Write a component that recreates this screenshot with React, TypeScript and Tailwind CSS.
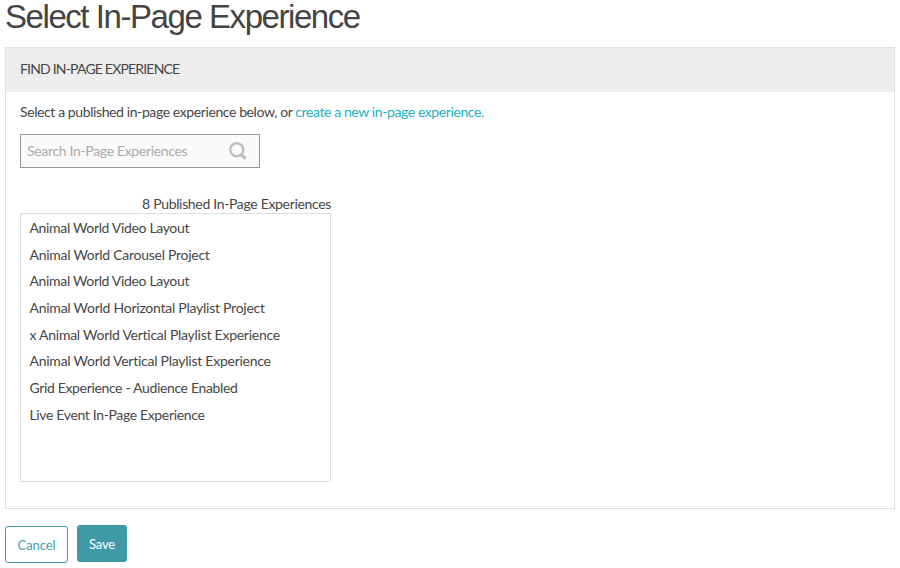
import React from "react";

const experiences: { name: string; tracking: string }[] = [
  { name: "Animal World Video Layout", tracking: "tracking-[-0.34px]" },
  { name: "Animal World Carousel Project", tracking: "tracking-[-0.27px]" },
  { name: "Animal World Video Layout", tracking: "tracking-[-0.34px]" },
  { name: "Animal World Horizontal Playlist Project", tracking: "tracking-[-0.25px]" },
  { name: "x Animal World Vertical Playlist Experience", tracking: "tracking-[-0.26px]" },
  { name: "Animal World Vertical Playlist Experience", tracking: "tracking-[-0.25px]" },
  { name: "Grid Experience - Audience Enabled", tracking: "tracking-[-0.35px]" },
  { name: "Live Event In-Page Experience", tracking: "tracking-[-0.35px]" },
];

function SearchIcon() {
  return (
    <svg width="18" height="18" viewBox="0 0 18 18" fill="none" stroke="#bebebe">
      <circle cx="7.7" cy="7.8" r="6.5" strokeWidth="2.4" />
      <path d="M12.6 12.9 L15.6 15.9" strokeWidth="3.2" strokeLinecap="round" />
    </svg>
  );
}

export default function App() {
  return (
    <main className="h-[568px] w-[900px] bg-white pl-[5px] font-['Lato',sans-serif] text-[14px] text-[#464646]">
      <h1 className="h-[47px] whitespace-nowrap font-['Liberation_Sans',sans-serif] text-[33px] leading-[33px] tracking-[-1.44px] text-[#444444]">
        Select In-Page Experience
      </h1>
      <section className="h-[462px] w-[890px] border border-[#dfdfdf]">
        <h2 className="flex h-[44px] items-center bg-[#ededed] pb-[3px] pl-[14px] text-[14px] tracking-[-0.81px]">
          FIND IN-PAGE EXPERIENCE
        </h2>
        <div className="pl-[14px] pt-[10px]">
          <p className="leading-5 tracking-[-0.4px]">
            Select a published in-page experience below, or{" "}
            <a className="text-[#1cb0c4]">create a new in-page experience.</a>
          </p>
          <label className="mt-3 flex h-[34px] w-[240px] items-center justify-between border border-[#999999] bg-[#fafafa] pl-[6px] pr-[12px]">
            <input
              className="w-[180px] bg-transparent pb-px tracking-[-0.33px] outline-none placeholder:text-[#ababab]"
              placeholder="Search In-Page Experiences"
            />
            <SearchIcon />
          </label>
          <div className="mt-[26px] w-[311px]">
            <p className="text-right leading-[19px] tracking-[-0.33px]">
              8 Published In-Page Experiences
            </p>
            <ul className="h-[269px] border border-[#dddddd] pl-[8.5px]">
              {experiences.map((item, i) => (
                <li key={i} className={`h-[26.67px] leading-[27px] ${item.tracking}`}>
                  {item.name}
                </li>
              ))}
            </ul>
          </div>
        </div>
      </section>
      <div className="flex gap-[9px] pt-4 text-[13px]">
        <button className="mt-px h-[37px] w-[63px] rounded-[3px] border border-[#439daa] pt-[2px] tracking-[-0.1px] text-[#439daa]">
          Cancel
        </button>
        <button className="h-[37px] w-[50px] rounded-[3px] bg-[#3f9aa8] pt-[2px] tracking-[-0.2px] text-white">
          Save
        </button>
      </div>
    </main>
  );
}
